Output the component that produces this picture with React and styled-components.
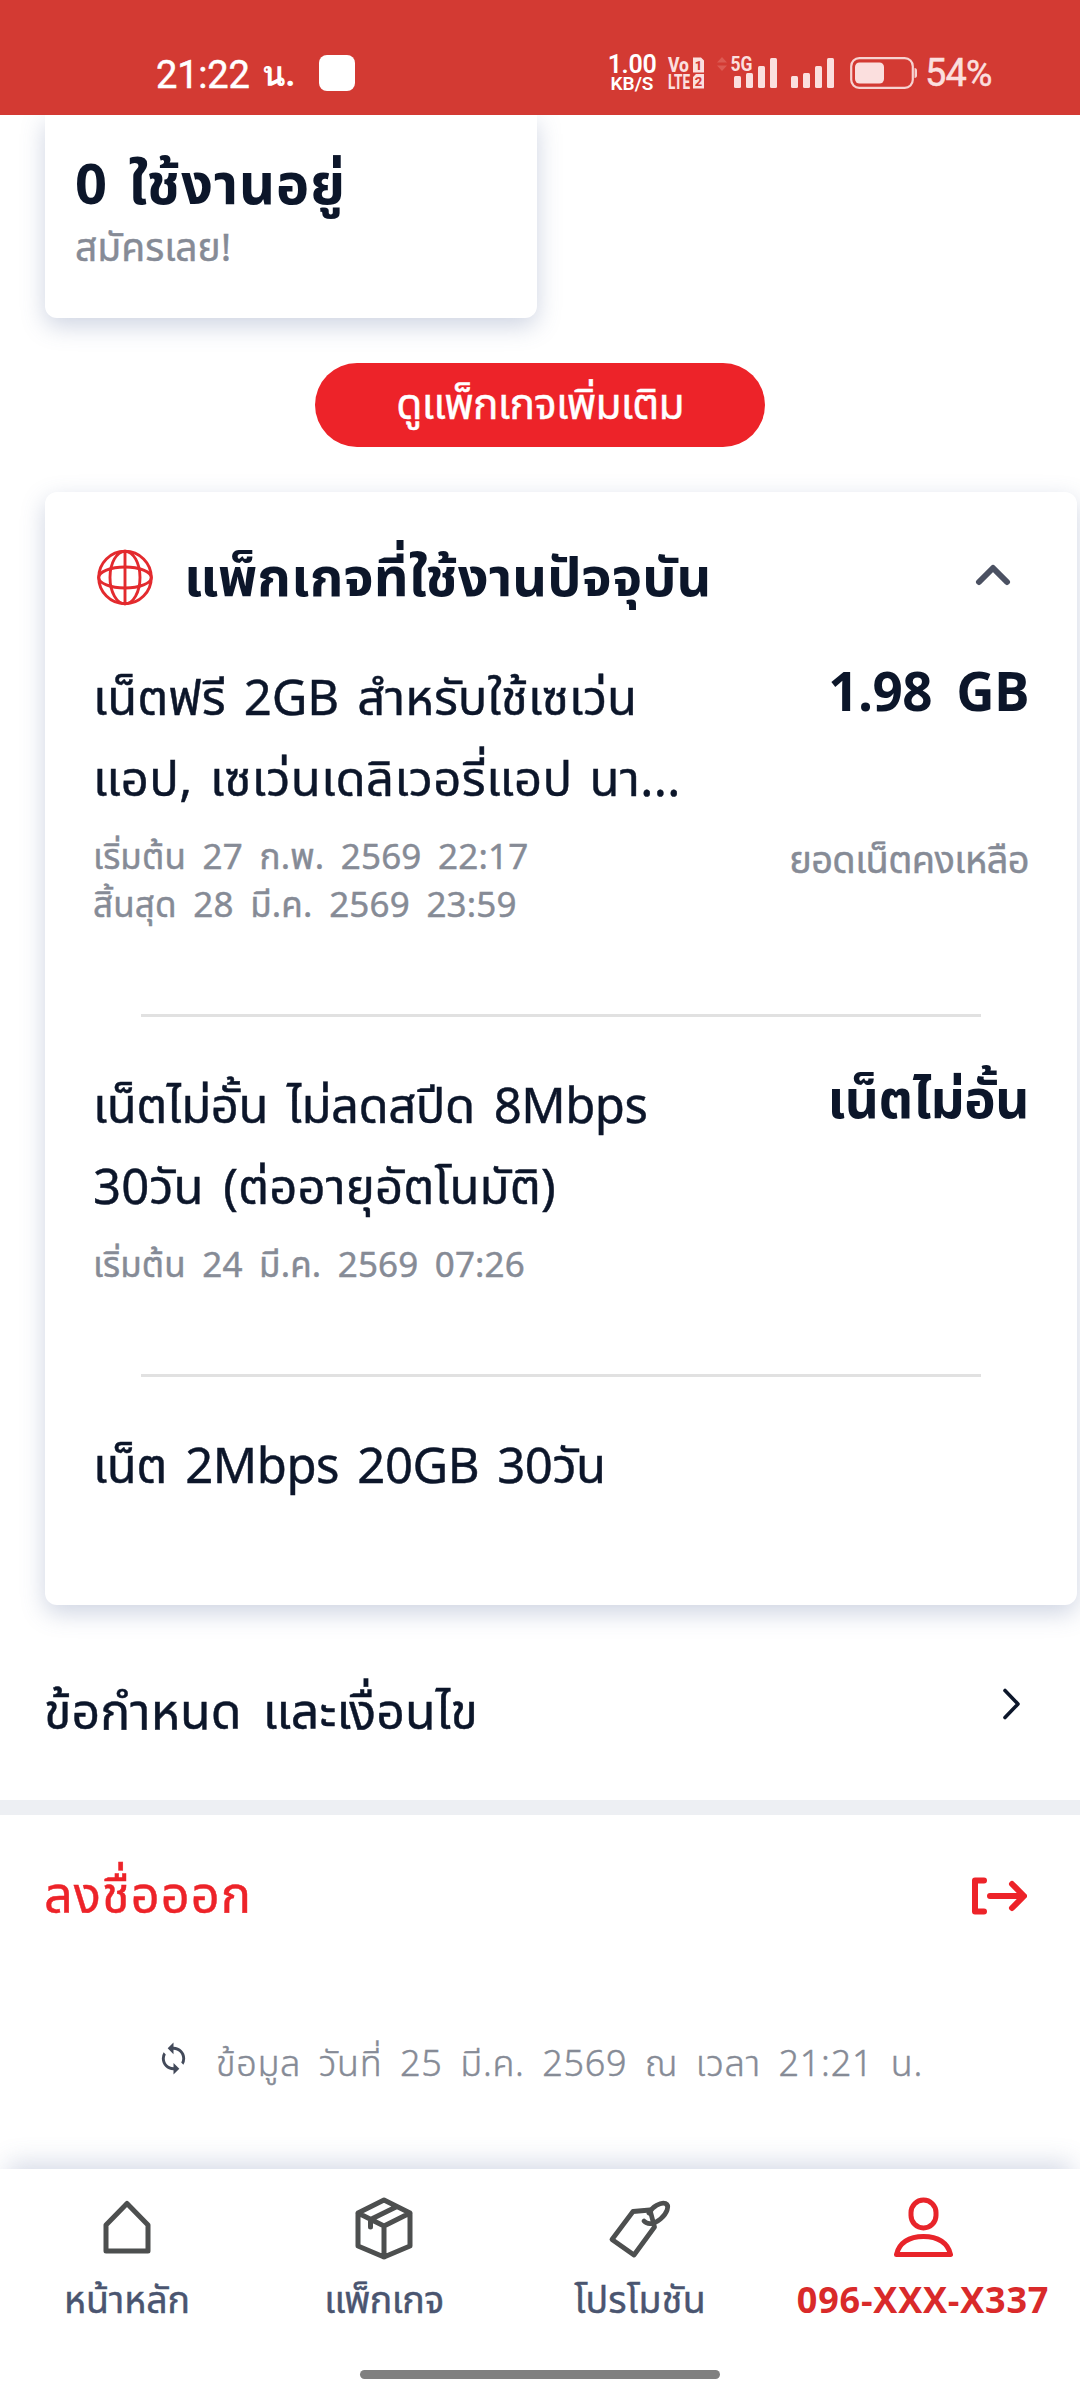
import React from 'react';
import styled, { createGlobalStyle } from 'styled-components';
import { MdSync } from 'react-icons/md';

const Global = createGlobalStyle`
  *, *::before, *::after { box-sizing: border-box; }
  body { margin: 0; background: #fff; }
`;

const red = '#ed2329';
const ink = '#0c162a';
const grey = '#868b96';

const Screen = styled.div`
  width: 1080px;
  height: 2400px;
  display: flex;
  flex-direction: column;
  overflow: hidden;
  background: #fff;
  color: ${ink};
  font-family: 'Noto Sans Thai', 'Noto Sans', sans-serif;
  white-space: nowrap;
`;

const Label = styled.span`
  display: block;
  font-size: ${(p) => p.$size}px;
  line-height: ${(p) => p.$line}px;
  font-weight: ${(p) => p.$weight || 400};
  letter-spacing: ${(p) => p.$track || 0}px;
  word-spacing: ${(p) => p.$gap ?? 0.21}em;
  color: ${(p) => p.$color || 'inherit'};
  -webkit-text-stroke: ${(p) => (p.$weight === 700 ? 0 : 0.45)}px currentColor;
`;

/* ---------- status bar ---------- */
const StatusBar = styled.header`
  flex: none;
  height: 115px;
  padding: 30px 84px 0 156px;
  display: flex;
  align-items: center;
  justify-content: space-between;
  background: #d33a33;
  color: #fff;
  font-family: Roboto, Loma, sans-serif;
`;
const Clock = styled.div`
  display: flex;
  align-items: center;
  font-size: 38px;
  line-height: 44px;
  letter-spacing: -0.2px;
`;
const ClockDigits = styled.span`
  padding-top: 4px;
  -webkit-text-stroke: 0.5px currentColor;
`;
const ClockSuffix = styled.span`
  margin-left: 12px;
  padding-top: 5px;
  width: 32px;
  font-size: 35px;
  font-weight: 700;
`;
const RecordDot = styled.span`
  width: 36px;
  height: 36px;
  margin-left: 25px;
  border-radius: 8px;
  background: #fff;
`;
const StatusIcons = styled.div`
  display: flex;
  align-items: center;
  svg { display: block; flex: none; overflow: visible; }
`;
const Speed = styled.div`
  width: 48px;
  margin: 2px 12px 0 0;
  display: flex;
  flex-direction: column;
  align-items: center;
  font-weight: 600;
  font-size: 25px;
  line-height: 20px;
  letter-spacing: -0.3px;
  small { font-size: 19px; line-height: 17px; letter-spacing: 0; }
`;
const IconGap = styled.span`
  width: ${(p) => p.$width}px;
`;
const Percent = styled.span`
  width: 71px;
  margin-left: 8px;
  padding-top: 2px;
  font-size: 38px;
  line-height: 44px;
  letter-spacing: -0.9px;
  color: #fbdfde;
  -webkit-text-stroke: 0.5px currentColor;
  small { font-size: 36px; }
`;

/* ---------- content ---------- */
const Content = styled.main`
  flex: 1;
  min-height: 0;
  display: flex;
  flex-direction: column;
`;
const panelShadow = '0 8px 24px rgba(80, 100, 150, 0.28)';
const SummaryCard = styled.section`
  flex: none;
  width: 492px;
  height: 203px;
  margin-left: 45px;
  padding: 36px 30px 0;
  border-radius: 0 0 12px 12px;
  background: #fff;
  box-shadow: ${panelShadow};
  clip-path: inset(0 -50px -50px -50px);
`;
const MoreButton = styled.button`
  flex: none;
  width: 450px;
  height: 84px;
  margin: 45px auto;
  padding: 2px 0 0;
  border: 0;
  border-radius: 42px;
  background: ${red};
  color: #fff;
  font-family: inherit;
  display: flex;
  justify-content: center;
`;
const PackageCard = styled.section`
  flex: none;
  width: 1032px;
  height: 1113px;
  margin-left: 45px;
  padding: 48px 48px 0;
  border-radius: 12px;
  background: #fff;
  box-shadow: ${panelShadow};
`;
const CardHeader = styled.div`
  height: 80px;
  display: flex;
  align-items: center;
  padding-left: 4px;
  margin-bottom: 40px;
  svg { flex: none; }
  svg:first-child { margin: -6px 31px 0 0; }
  svg:last-child { margin: -10px 18px 0 auto; }
`;
const PackageRow = styled.div`
  display: grid;
  grid-template-columns: 1fr auto;
  row-gap: 13px;
  align-items: start;
  padding-bottom: 83px;
`;
const Value = styled.div`
  text-align: right;
  padding-top: ${(p) => p.$drop || 0}px;
`;
const Divider = styled.hr`
  width: 840px;
  height: 3px;
  margin: 0 auto 51px;
  border: 0;
  background: #e1e1e1;
`;
const LinkRow = styled.div`
  flex: none;
  height: ${(p) => p.$height}px;
  padding: ${(p) => p.$top || 0}px ${(p) => p.$right}px 0 44px;
  display: flex;
  align-items: center;
  justify-content: space-between;
  color: ${(p) => p.$color || ink};
  svg { flex: none; margin-top: ${(p) => p.$iconShift || 0}px; }
`;
const Band = styled.div`
  flex: none;
  height: 15px;
  background: #edeff3;
`;
const Updated = styled.div`
  flex: none;
  height: 168px;
  padding-left: 156px;
  display: flex;
  align-items: center;
  gap: 25px;
  color: #434a5a;
  svg { flex: none; margin-top: -14px; }
`;

/* ---------- bottom navigation ---------- */
const NavBar = styled.nav`
  flex: none;
  position: relative;
  height: 231px;
  padding-top: 27px;
  background: #fff;
  box-shadow: 0 -14px 24px -8px rgba(80, 100, 150, 0.24);
`;
const NavItems = styled.div`
  display: grid;
  grid-template-columns: 254px 260px 252px 314px;
`;
const NavItem = styled.div`
  display: flex;
  flex-direction: column;
  align-items: center;
  gap: 17px;
  color: ${(p) => (p.$active ? '#e8242a' : '#4d4f4f')};
  svg { display: block; }
`;
const HomeIndicator = styled.div`
  width: 360px;
  height: 9px;
  margin: 43px auto 0;
  border-radius: 5px;
  background: #808080;
`;

const VoLte = () => (
  <svg width="36" height="32" viewBox="0 0 36 32" fill="#fbdfde" fontFamily="Roboto, sans-serif" fontWeight="800">
    <text x="0" y="14.500" fontSize="20" textLength="21" lengthAdjust="spacingAndGlyphs">Vo</text>
    <text x="0" y="31.500" fontSize="20" textLength="22" lengthAdjust="spacingAndGlyphs">LTE</text>
    <path d="M25 0.500h8l3 3v12H25zM28 17h8v14.500H25V20z" />
    <g fill="#d33a33" fontSize="13" textAnchor="middle">
      <text x="30.500" y="12.500">1</text>
      <text x="30.500" y="29">2</text>
    </g>
  </svg>
);

const Bars = ({ network }) => (
  <svg width={network ? 60 : 43} height="33" viewBox={network ? '-17 0 60 33' : '0 0 43 33'} fill="#fbdfde">
    {[[0, 20], [12, 17], [24, 10], [36, 2]].map(([x, y]) => (
      <rect key={x} x={x} y={y} width="7" height={32 - y} rx="1.5" />
    ))}
    {network && (
      <>
        <path d="M-17 6.500l5-5.500 5 5.500zM-17 9.500l5 5.500 5-5.500z" fill="#dc5a53" />
        <text x="-3.500" y="15" fontSize="21" fontWeight="700" fontFamily="Roboto, sans-serif" textLength="22" lengthAdjust="spacingAndGlyphs">5G</text>
      </>
    )}
  </svg>
);

const Battery = () => (
  <svg width="67" height="32" viewBox="0 0 67 32" fill="none">
    <rect x="1.200" y="1.200" width="61.600" height="29.600" rx="8" stroke="#f7d3d1" strokeWidth="2.200" />
    <rect x="5" y="5.500" width="29" height="21" rx="4.500" fill="#fbdfde" />
    <path d="M64.500 11c1.700 0 2.500 1 2.500 2.500v5c0 1.500-.8 2.500-2.500 2.500z" fill="#f7d3d1" />
  </svg>
);

const Globe = () => (
  <svg width="56" height="57" viewBox="0 0 56 57" fill="none" stroke="#e32a2e" strokeWidth="2.900">
    <circle cx="28" cy="28.500" r="26.300" />
    <ellipse cx="28" cy="28.500" rx="15" ry="26.300" />
    <ellipse cx="28" cy="28.500" rx="26.300" ry="10.500" />
    <path d="M28 2v53" />
  </svg>
);

const ChevronUp = () => (
  <svg width="36" height="22" viewBox="0 0 36 22" fill="none" stroke="#4b5162" strokeWidth="6" strokeLinecap="round" strokeLinejoin="round">
    <path d="M4 18L18 4l14 14" />
  </svg>
);

const ChevronRight = () => (
  <svg width="20" height="32" viewBox="0 0 20 32" fill="none" stroke={ink} strokeWidth="3.600" strokeLinecap="round" strokeLinejoin="round">
    <path d="M3 2.500L16 16 3 29.500" />
  </svg>
);

const LogOut = () => (
  <svg width="56" height="38" viewBox="0 0 56 38" fill="none" stroke={red} strokeWidth="6" strokeLinecap="round" strokeLinejoin="round">
    <path d="M13 3.500H4v31h9M19 19h33M41 7l12 12-12 12" />
  </svg>
);

const navStroke = { width: 64, height: 64, viewBox: '0 0 64 64', fill: 'none', stroke: 'currentColor', strokeWidth: 5, strokeLinecap: 'round', strokeLinejoin: 'round' };

const HomeIcon = () => (
  <svg {...navStroke}><path d="M11 29L32 7.500 53 29V55H11z" /></svg>
);
const BoxIcon = () => (
  <svg {...navStroke}>
    <path d="M32 4l26 13v33L32 61 6 50V17zM6 17l26 13 26-13M32 30v31M45 10.500L18.500 23.500V31" />
  </svg>
);
const TagIcon = () => (
  <svg {...navStroke} strokeWidth="4.800">
    <path d="M4 43.500L25 15.500 42 14l4.500 17L26 59z" />
    <path d="M41 17c3-6 12-11.500 16.500-9.500s1.500 10-5 15.500-13 6-16.500 2" />
  </svg>
);
const PersonIcon = () => (
  <svg {...navStroke}>
    <rect x="20" y="4" width="25" height="28" rx="12.500" />
    <path d="M5.500 58.500C8 47 18 40.500 32.500 40.500S57 47 59.500 58.500z" />
  </svg>
);

const NAV = [
  { label: 'หน้าหลัก', Icon: HomeIcon, size: 37.5, track: 0 },
  { label: 'แพ็กเกจ', Icon: BoxIcon, size: 37.5, track: -0.5 },
  { label: 'โปรโมชัน', Icon: TagIcon, size: 37.5, track: 0.2 },
  { label: '096-XXX-X337', Icon: PersonIcon, size: 36, track: 0.8, active: true },
];

export default function App() {
  return (
    <Screen>
      <Global />
      <StatusBar>
        <Clock>
          <ClockDigits>21:22</ClockDigits>
          <ClockSuffix>น.</ClockSuffix>
          <RecordDot />
        </Clock>
        <StatusIcons>
          <Speed>1.00<small>KB/S</small></Speed>
          <VoLte />
          <IconGap $width={13} />
          <Bars network />
          <IconGap $width={14} />
          <Bars />
          <IconGap $width={16} />
          <Battery />
          <Percent>54<small>%</small></Percent>
        </StatusIcons>
      </StatusBar>

      <Content>
        <SummaryCard>
          <Label $size={56} $line={72} $weight={700} $track={0.9} $gap={0.09}>0 ใช้งานอยู่</Label>
          <Label $size={39} $line={54} $color={grey}>สมัครเลย!</Label>
        </SummaryCard>

        <MoreButton>
          <Label $size={42.5} $line={82} $track={-0.8}>ดูแพ็กเกจเพิ่มเติม</Label>
        </MoreButton>

        <PackageCard>
          <CardHeader>
            <Globe />
            <Label $size={54} $line={78} $weight={700} $track={0.1}>แพ็กเกจที่ใช้งานปัจจุบัน</Label>
            <ChevronUp />
          </CardHeader>

          <PackageRow>
            <div>
              <Label $size={49} $line={81} $gap={0.11} $track={-0.02}>เน็ตฟรี 2GB สำหรับใช้เซเว่น</Label>
              <Label $size={49} $line={81} $gap={0.08} $track={0.4}>แอป, เซเว่นเดลิเวอรี่แอป นา...</Label>
            </div>
            <Value>
              <Label $size={53} $line={70} $weight={700} $track={-0.6}>1.98 GB</Label>
            </Value>
            <div>
              <Label $size={35} $line={48} $color={grey} $track={0.15}>เริ่มต้น 27 ก.พ. 2569 22:17</Label>
              <Label $size={35} $line={48} $color={grey} $track={0.15}>สิ้นสุด 28 มี.ค. 2569 23:59</Label>
            </div>
            <Value $drop={3}>
              <Label $size={38} $line={48} $color={grey} $track={-0.6}>ยอดเน็ตคงเหลือ</Label>
            </Value>
          </PackageRow>
          <Divider />

          <PackageRow>
            <div>
              <Label $size={49} $line={81} $gap={0.14} $track={-0.5}>เน็ตไม่อั้น ไม่ลดสปีด 8Mbps</Label>
              <Label $size={49} $line={81} $gap={0.14} $track={0.1}>30วัน (ต่ออายุอัตโนมัติ)</Label>
            </div>
            <Value>
              <Label $size={53} $line={69} $weight={700} $track={-0.5}>เน็ตไม่อั้น</Label>
            </Value>
            <Label $size={35} $line={48} $color={grey} $track={0.1}>เริ่มต้น 24 มี.ค. 2569 07:26</Label>
          </PackageRow>
          <Divider />

          <Label $size={49} $line={81} $gap={0.12} $track={-0.45}>เน็ต 2Mbps 20GB 30วัน</Label>
        </PackageCard>

        <LinkRow $height={195} $top={22} $right={58} $iconShift={-20}>
          <Label $size={50} $line={70} $gap={0.16} $track={0.1}>ข้อกำหนด และเงื่อนไข</Label>
          <ChevronRight />
        </LinkRow>
        <Band />
        <LinkRow $height={166} $right={53} $iconShift={-4} $color={red}>
          <Label $size={50.5} $line={70} $track={1}>ลงชื่อออก</Label>
          <LogOut />
        </LinkRow>

        <Updated>
          <MdSync size={35} />
          <Label $size={36} $line={50} $weight={300} $track={0.72} $color={grey}>ข้อมูล วันที่ 25 มี.ค. 2569 ณ เวลา 21:21 น.</Label>
        </Updated>
      </Content>

      <NavBar>
        <NavItems>
          {NAV.map(({ label, Icon, size, track, active }) => (
            <NavItem key={label} $active={active}>
              <Icon />
              <Label $size={size} $line={50} $track={track} $weight={active ? 700 : 400} $color={active ? '#d92a2a' : '#4a5570'}>{label}</Label>
            </NavItem>
          ))}
        </NavItems>
        <HomeIndicator />
      </NavBar>
    </Screen>
  );
}
